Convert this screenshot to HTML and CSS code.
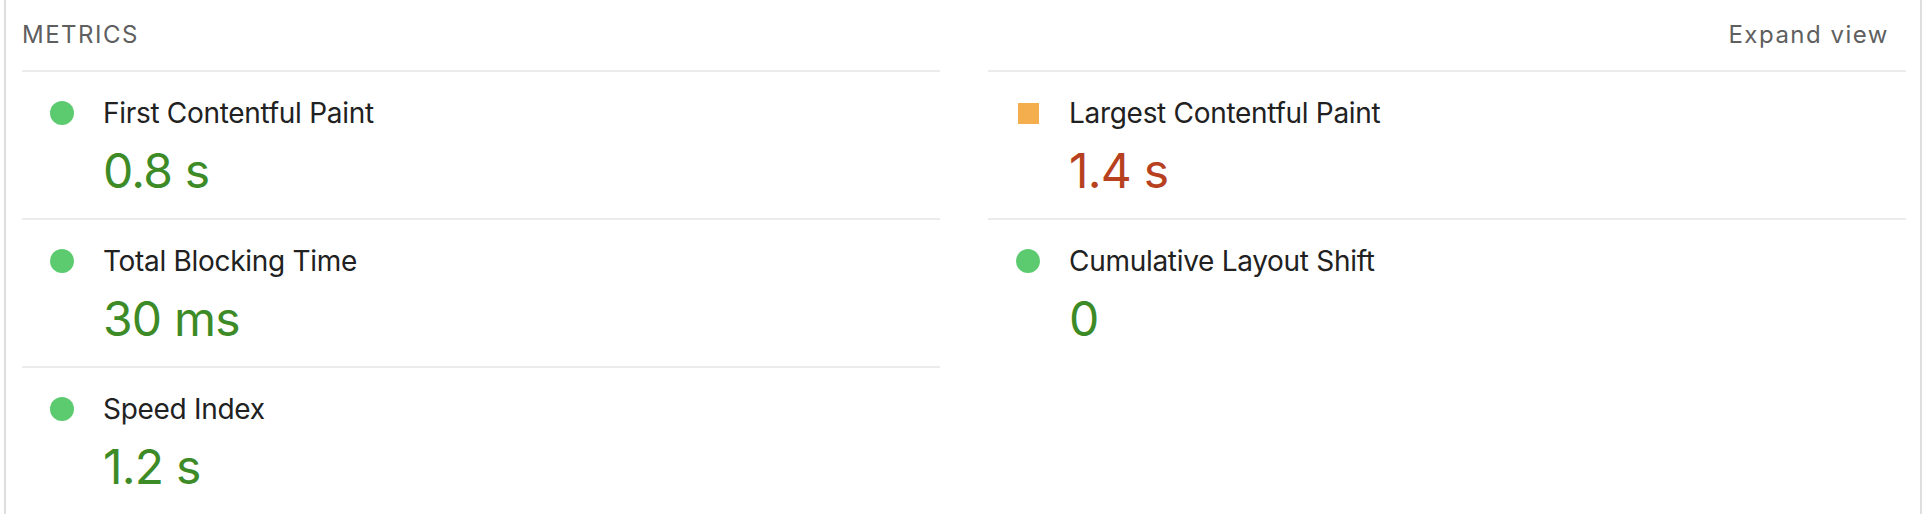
FILE: index.html
```html
<!DOCTYPE html>
<html lang="en">

<head>
    <meta charset="UTF-8">
    <meta name="viewport" content="width=device-width, initial-scale=1.0">
    <title>Metrics</title>
    <link rel="stylesheet" href="styles.css">
</head>

<body>
    <div class="panel">
        <div class="panel-header">
            <span class="panel-title">Metrics</span>
            <span class="expand">Expand view</span>
        </div>

        <div class="metrics">
            <div class="metric">
                <span class="icon pass"></span>
                <div class="metric-body">
                    <div class="metric-title">First Contentful Paint</div>
                    <div class="metric-value pass">0.8&nbsp;s</div>
                </div>
            </div>
            <div class="metric">
                <span class="icon average"></span>
                <div class="metric-body">
                    <div class="metric-title">Largest Contentful Paint</div>
                    <div class="metric-value average">1.4&nbsp;s</div>
                </div>
            </div>
            <div class="metric">
                <span class="icon pass"></span>
                <div class="metric-body">
                    <div class="metric-title">Total Blocking Time</div>
                    <div class="metric-value pass">30&nbsp;ms</div>
                </div>
            </div>
            <div class="metric">
                <span class="icon pass"></span>
                <div class="metric-body">
                    <div class="metric-title">Cumulative Layout Shift</div>
                    <div class="metric-value pass">0</div>
                </div>
            </div>
            <div class="metric">
                <span class="icon pass"></span>
                <div class="metric-body">
                    <div class="metric-title">Speed Index</div>
                    <div class="metric-value pass">1.2&nbsp;s</div>
                </div>
            </div>
        </div>
    </div>
</body>

</html>
```

FILE: styles.css
```css
body {
    font-family: Inter, 'Noto Sans', sans-serif;
    background-color: #fff;
    margin: 0;
    color: #212121;
}

.panel {
    margin: 0 2px 0 4px;
    min-height: 100vh;
    box-sizing: border-box;
    border-left: 2px solid #dedede;
    border-right: 2px solid #dedede;
    padding: 0 14px 0 16px;
}

.panel-header {
    display: flex;
    justify-content: space-between;
    align-items: center;
    padding: 19px 0;
    font-size: 24px;
    line-height: 32px;
    letter-spacing: 1.5px;
    color: #5f5f5f;
}

.panel-title {
    text-transform: uppercase;
}

.expand {
    margin-right: 17px;
}

.metrics {
    display: grid;
    grid-template-columns: 1fr 1fr;
    column-gap: 48px;
}

.metric {
    display: flex;
    align-items: flex-start;
    gap: 29px;
    padding: 21px 0 19px 28px;
    border-top: 2px solid #ebebeb;
}

.icon {
    flex: none;
    width: 24px;
    height: 40px;
    display: flex;
    align-items: center;
    justify-content: center;
}

.icon::before {
    content: "";
    display: block;
}

.icon.pass::before {
    width: 24px;
    height: 24px;
    border-radius: 50%;
    background-color: #5ccb70;
}

.icon.average::before {
    width: 21px;
    height: 21px;
    background-color: #f4ae4d;
}

.metric-title {
    font-size: 28px;
    line-height: 40px;
    letter-spacing: -0.3px;
}

.metric-value {
    margin-top: 10px;
    font-size: 48px;
    line-height: 56px;
    letter-spacing: -0.8px;
}

.metric-value.pass {
    color: #3d8b27;
}

.metric-value.average {
    color: #b7411f;
}
```
